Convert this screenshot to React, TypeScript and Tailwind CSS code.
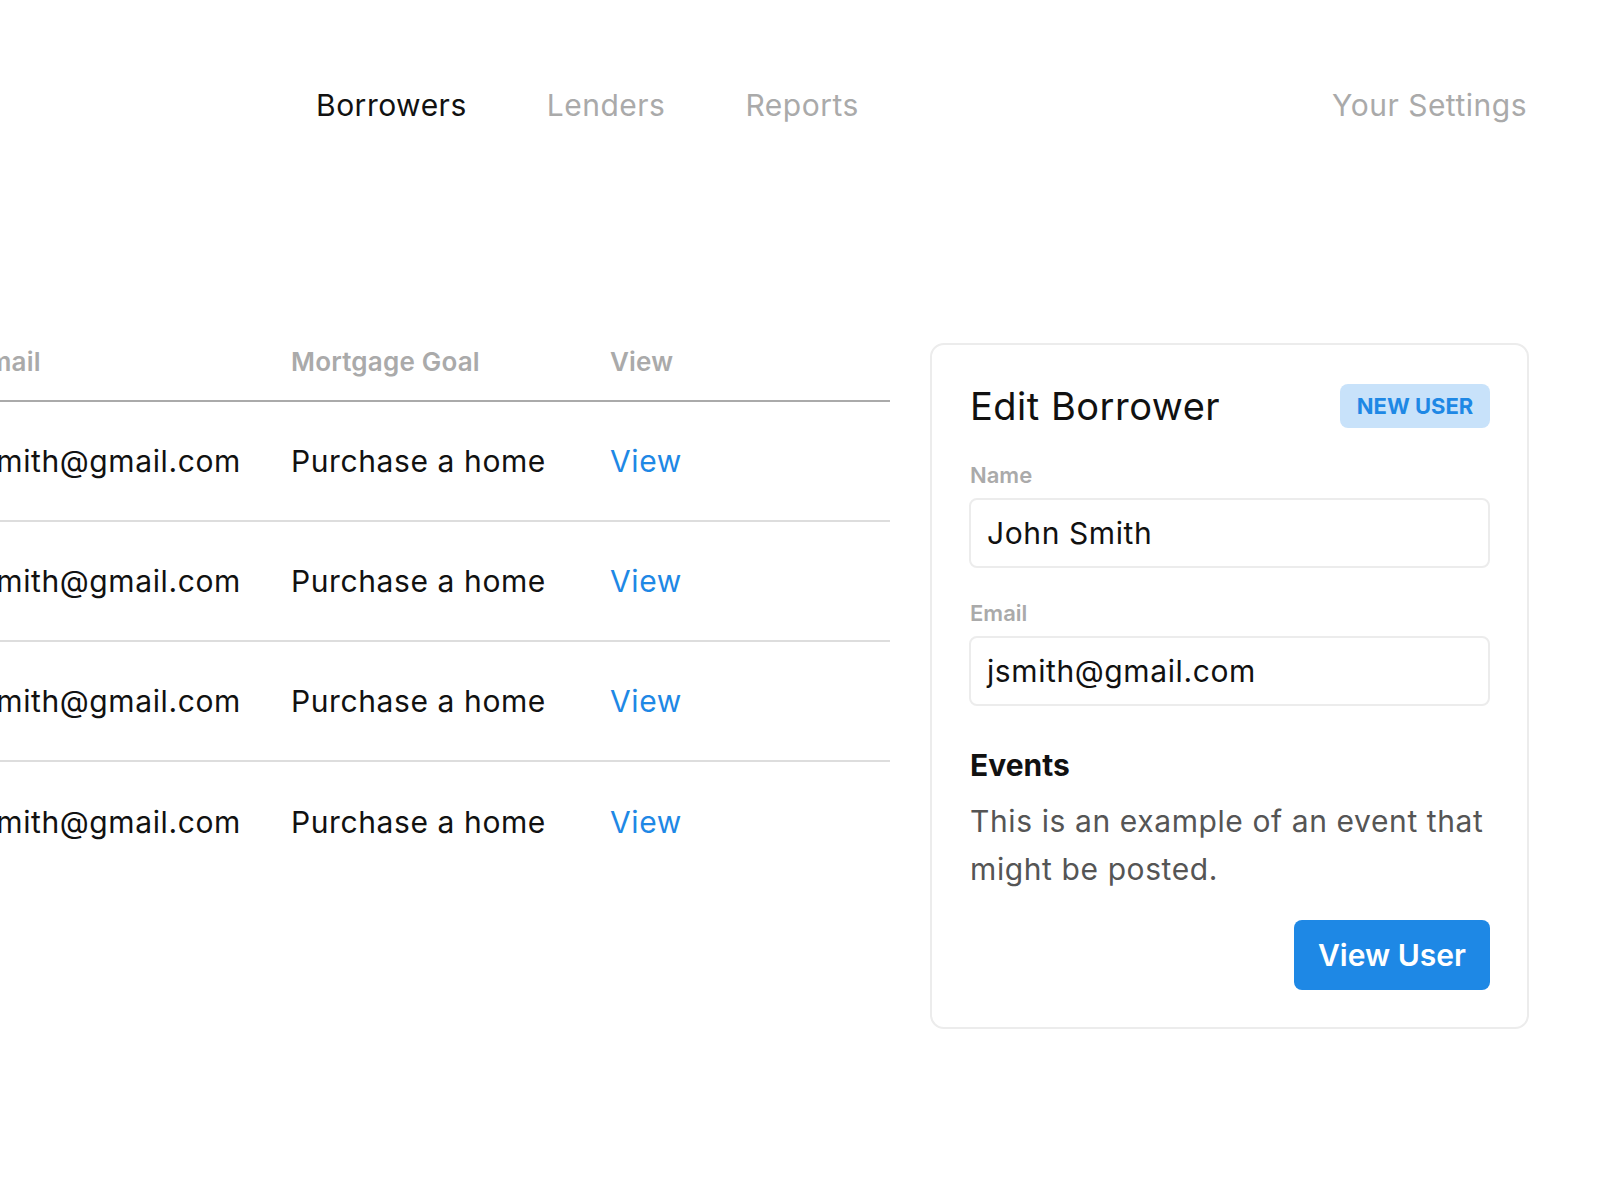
import React from "react";

const rows = [1, 2, 3, 4];

export default function App() {
  return (
    <div
      className="w-[1600px] h-[1200px] bg-white overflow-hidden text-[#111]"
      style={{ fontFamily: "Inter, 'Noto Sans', sans-serif" }}
    >
      {/* Nav */}
      <nav className="h-[210px] flex items-center pl-[316px] pr-[73px] gap-[80px] text-[30px] leading-[40px] tracking-[0.5px]">
        <span className="text-[#111]">Borrowers</span>
        <span className="text-[#aaaaaa]">Lenders</span>
        <span className="text-[#aaaaaa]">Reports</span>
        <span className="ml-auto text-[#aaaaaa]">Your Settings</span>
      </nav>

      <main className="flex items-start pt-[112px]">
        {/* Table */}
        <div className="ml-[-28px] w-[918px] shrink-0">
          <div className="h-[80px] flex items-center border-b-2 border-[#aaaaaa] text-[26px] font-semibold text-[#aaaaaa] tracking-[0.2px]">
            <div className="w-[319px] shrink-0">Email</div>
            <div className="w-[319px] shrink-0">Mortgage Goal</div>
            <div>View</div>
          </div>
          {rows.map((r, i) => (
            <div
              key={r}
              className={`h-[120px] flex items-center text-[30px] tracking-[0.6px] ${
                i < rows.length - 1 ? "border-b-2 border-[#dddddd]" : ""
              }`}
            >
              <div className="w-[319px] shrink-0">jsmith@gmail.com</div>
              <div className="w-[319px] shrink-0">Purchase a home</div>
              <div className="text-[#1e88e5]">View</div>
            </div>
          ))}
        </div>

        {/* Card */}
        <div className="ml-[40px] mt-[21px] w-[599px] shrink-0 border-2 border-[#ececec] rounded-[14px] px-[37px] pt-[39px] pb-[37px]">
          <div className="h-[44px] flex items-center justify-between">
            <h2 className="text-[38px] leading-[44px] font-normal text-[#111] tracking-[0.5px] pl-[1px]">Edit Borrower</h2>
            <span className="h-[44px] w-[150px] flex items-center justify-center rounded-[8px] bg-[#c8e2fa] text-[#1e88e5] text-[22px] font-bold">
              NEW USER
            </span>
          </div>

          <div className="mt-[33px] h-[28px] leading-[28px] text-[22px] font-semibold text-[#aaaaaa] pl-[1px]">Name</div>
          <div className="mt-[9px] h-[70px] border-2 border-[#ececec] rounded-[8px] flex items-center px-[16px] text-[30px] text-[#111] tracking-[0.6px]">
            John Smith
          </div>

          <div className="mt-[31px] h-[28px] leading-[28px] text-[22px] font-semibold text-[#aaaaaa] pl-[1px]">Email</div>
          <div className="mt-[9px] h-[70px] border-2 border-[#ececec] rounded-[8px] flex items-center px-[16px] text-[30px] text-[#111] tracking-[0.6px]">
            jsmith@gmail.com
          </div>

          <div className="mt-[41px] h-[36px] leading-[36px] text-[30px] font-bold text-[#111] pl-[1px]">Events</div>
          <p className="mt-[14px] text-[30px] leading-[48px] text-[#555555] tracking-[0.6px] pl-[1px]">
            This is an example of an event that might be posted.
          </p>

          <div className="mt-[27px] flex justify-end">
            <button className="h-[70px] w-[196px] rounded-[8px] bg-[#1e88e5] text-white text-[30px] font-semibold">
              View User
            </button>
          </div>
        </div>
      </main>
    </div>
  );
}
